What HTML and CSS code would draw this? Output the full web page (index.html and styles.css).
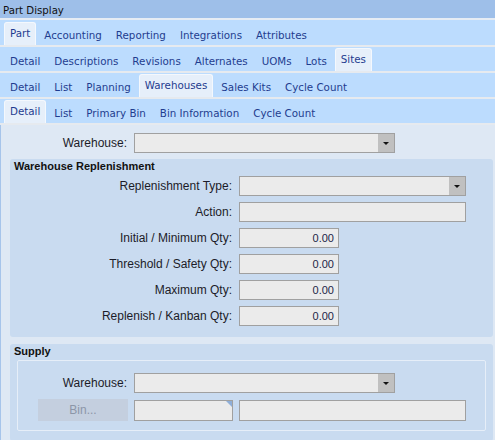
FILE: index.html
```html
<!DOCTYPE html>
<html>
<head>
<meta charset="utf-8">
<title>Part Display</title>
<link rel="stylesheet" href="styles.css">
</head>
<body>
<div class="window">
  <div class="titlebar">Part Display</div>

  <div class="tabrow first">
    <div class="tab sel">Part</div>
    <div class="tab">Accounting</div>
    <div class="tab">Reporting</div>
    <div class="tab">Integrations</div>
    <div class="tab">Attributes</div>
  </div>
  <div class="tabrow">
    <div class="tab">Detail</div>
    <div class="tab">Descriptions</div>
    <div class="tab">Revisions</div>
    <div class="tab">Alternates</div>
    <div class="tab">UOMs</div>
    <div class="tab">Lots</div>
    <div class="tab sel">Sites</div>
  </div>
  <div class="tabrow">
    <div class="tab">Detail</div>
    <div class="tab">List</div>
    <div class="tab">Planning</div>
    <div class="tab sel">Warehouses</div>
    <div class="tab">Sales Kits</div>
    <div class="tab">Cycle Count</div>
  </div>
  <div class="tabrow">
    <div class="tab sel">Detail</div>
    <div class="tab">List</div>
    <div class="tab">Primary Bin</div>
    <div class="tab">Bin Information</div>
    <div class="tab">Cycle Count</div>
  </div>

  <div class="content">
    <div class="frow top">
      <div class="lbl lbl-top">Warehouse:</div>
      <div class="combo w-wh"><div class="btn"><span class="arrow"></span></div></div>
    </div>

    <div class="group">
      <div class="gtitle">Warehouse Replenishment</div>
      <div class="grows">
        <div class="frow">
          <div class="lbl lbl-repl">Replenishment Type:</div>
          <div class="combo w-long"><div class="btn"><span class="arrow"></span></div></div>
        </div>
        <div class="frow">
          <div class="lbl lbl-repl">Action:</div>
          <div class="text w-long"></div>
        </div>
        <div class="frow">
          <div class="lbl lbl-repl">Initial / Minimum Qty:</div>
          <div class="text qty">0.00</div>
        </div>
        <div class="frow">
          <div class="lbl lbl-repl">Threshold / Safety Qty:</div>
          <div class="text qty">0.00</div>
        </div>
        <div class="frow">
          <div class="lbl lbl-repl">Maximum Qty:</div>
          <div class="text qty">0.00</div>
        </div>
        <div class="frow">
          <div class="lbl lbl-repl">Replenish / Kanban Qty:</div>
          <div class="text qty">0.00</div>
        </div>
      </div>
    </div>

    <div class="group supply">
      <div class="gtitle">Supply</div>
      <div class="inner">
        <div class="frow">
          <div class="lbl lbl-sup">Warehouse:</div>
          <div class="combo w-wh"><div class="btn"><span class="arrow"></span></div></div>
        </div>
        <div class="frow binrow">
          <div class="binbtn">Bin...</div>
          <div class="text bin"></div>
          <div class="text w-long"></div>
        </div>
      </div>
    </div>
  </div>
</div>
</body>
</html>
```

FILE: styles.css
```css
html, body {
  margin: 0;
  padding: 0;
  background: #dee8f4;
  overflow: hidden;
}

.window {
  width: 495px;
  height: 440px;
  overflow: hidden;
  background: #dee8f4;
}

.titlebar {
  height: 16px;
  padding: 2px 0 0 3px;
  line-height: 17px;
  background: #9ebfe9;
  border-bottom: 2px solid #e6ecf4;
  font-family: "DejaVu Sans", sans-serif;
  font-size: 10.2px;
  color: #111;
  white-space: nowrap;
}

.tabrow {
  display: flex;
  align-items: flex-end;
  height: 24px;
  padding-left: 4px;
  background: #bcdcfe;
  border-bottom: 2px solid #e6eaef;
}

.tabrow.first {
  height: 25px;
}

.tab {
  height: 24px;
  box-sizing: border-box;
  padding: 8px 6px 0;
  margin-right: 2px;
  line-height: 13px;
  font-family: "DejaVu Sans", sans-serif;
  font-size: 10.3px;
  color: #1f3c8f;
  white-space: nowrap;
}

.tab.sel {
  height: 23px;
  padding: 4px 5px 0;
  background: #e6effa;
  border: 1px solid #f4f8fd;
  border-bottom: none;
  border-radius: 3px 3px 0 0;
}

.content {
  border-left: 1px solid #a6c4ea;
  padding-top: 8px;
  height: 400px;
}

.frow {
  display: flex;
  align-items: center;
  gap: 7px;
}

.lbl {
  text-align: right;
  font-family: "Liberation Sans", Arial, sans-serif;
  font-size: 12px;
  color: #1c1c28;
  white-space: nowrap;
}

.lbl-top { width: 126px; }
.lbl-repl { width: 218px; }
.lbl-sup { width: 109px; }

.combo, .text {
  height: 20px;
  box-sizing: border-box;
  border: 1px solid #a0a0a0;
  background: #ebebeb;
}

.combo {
  display: flex;
  justify-content: flex-end;
}

.combo .btn {
  width: 16px;
  background: #c0c0c0;
  display: flex;
  align-items: center;
  justify-content: center;
}

.arrow {
  width: 0;
  height: 0;
  border-left: 3px solid transparent;
  border-right: 3px solid transparent;
  border-top: 3px solid #111;
  margin-top: 1px;
}

.w-wh { width: 261px; }
.w-long { width: 227px; }

.qty {
  width: 100px;
  text-align: right;
  padding-right: 4px;
  font-family: "Liberation Sans", Arial, sans-serif;
  font-size: 11px;
  line-height: 18px;
  color: #1b2448;
}

.group {
  margin: 6px 0 0 9px;
  width: 483px;
  box-sizing: border-box;
  background: #c9dbf0;
  border-radius: 3px;
  padding: 1px 0 11px 4px;
}

.gtitle {
  font-family: "Liberation Sans", Arial, sans-serif;
  font-weight: bold;
  font-size: 11px;
  line-height: 13px;
  color: #111;
}

.grows {
  display: flex;
  flex-direction: column;
  gap: 6px;
  margin-top: 3px;
}

.group.supply {
  margin-top: 7px;
  padding-bottom: 10px;
}

.inner {
  margin: 2px 0 0 3px;
  width: 469px;
  box-sizing: border-box;
  border: 1px solid #e6eef8;
  border-radius: 2px;
  padding: 12px 0 9px 0;
}

.binrow {
  margin-top: 6px;
  gap: 6px;
}

.binbtn {
  margin-left: 20px;
  width: 90px;
  height: 22px;
  line-height: 22px;
  background: #c4cfdf;
  text-align: center;
  font-family: "Liberation Sans", Arial, sans-serif;
  font-size: 12px;
  color: #8c96a8;
}

.text.bin {
  width: 99px;
  height: 21px;
  position: relative;
}

.text.bin::after {
  content: "";
  position: absolute;
  top: 0;
  right: 0;
  width: 0;
  height: 0;
  border-top: 6px solid #8eaed8;
  border-left: 6px solid transparent;
}

.binrow .w-long {
  height: 21px;
}
```
